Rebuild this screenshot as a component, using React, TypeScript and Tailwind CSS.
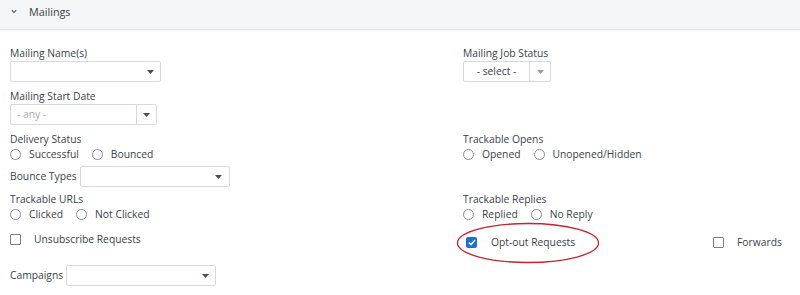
import type { ReactNode } from 'react';

const text = 'text-[10.3px] leading-[15px] font-medium text-[#3a3f49]';

function Caret({ light }: { light?: boolean }) {
  return (
    <svg width="7" height="4" viewBox="0 0 7 4">
      <path d="M0 0h7L3.5 4z" fill={light ? '#9a9ea4' : '#4a4f57'} />
    </svg>
  );
}

function Select({ w, value, placeholder, split, light }: { w: string; value?: string; placeholder?: string; split?: string; light?: boolean }) {
  return (
    <div className={`${w} h-[21px] flex items-stretch border border-[#d6dade] rounded-[2px] bg-white`}>
      <div className={`flex-1 flex items-center ${value ? 'justify-center' : 'pl-[6px]'} ${text}`}>
        {value && <span>{value}</span>}
        {placeholder && <span className="text-[#a9adb2] font-normal">{placeholder}</span>}
      </div>
      <div className={`${split ?? 'w-[20px]'} ${split ? 'border-l border-[#d6dade]' : ''} flex items-center justify-center`}>
        <Caret light={light} />
      </div>
    </div>
  );
}

function Radio({ label }: { label: string }) {
  return (
    <div className="flex items-center gap-[8px]">
      <span className="w-[11px] h-[11px] rounded-full border border-[#8a8e94] bg-white" />
      <span className={text}>{label}</span>
    </div>
  );
}

function Check({ label, checked, gap = 'gap-[13px]' }: { label: string; checked?: boolean; gap?: string }) {
  return (
    <div className={`flex items-center ${gap}`}>
      {checked ? (
        <span className="w-[11px] h-[11px] rounded-[2px] bg-[#1b6fd6] flex items-center justify-center">
          <svg width="8" height="7" viewBox="0 0 8 7">
            <path d="M1 3.6l2 2L7 1" fill="none" stroke="#fff" strokeWidth="1.5" />
          </svg>
        </span>
      ) : (
        <span className="w-[11px] h-[11px] rounded-[1px] border border-[#7c8087] bg-white" />
      )}
      <span className={text}>{label}</span>
    </div>
  );
}

function Label({ children }: { children: ReactNode }) {
  return <div className={text}>{children}</div>;
}

export default function App() {
  return (
    <div className="w-[800px] h-[295px] bg-white overflow-hidden font-['Open_Sans','Liberation_Sans',sans-serif]">
      {/* Section header */}
      <div className="h-[30px] bg-[#f3f5f6] border-b border-[#dee3e6] shadow-[0_1px_2px_rgba(0,0,0,0.05)] flex items-start pt-[4px] pl-[11px] gap-[12px]">
        <svg width="6" height="15" viewBox="0 0 6 15" className="shrink-0">
          <path d="M0.8 6.2L3 8.4l2.2-2.2" fill="none" stroke="#555b63" strokeWidth="1.1" />
        </svg>
        <span className="text-[10.8px] leading-[15px] font-medium text-[#3a3f49]">Mailings</span>
      </div>

      <div className="pl-[10px]">
        {/* row 1 */}
        <div className="flex mt-[16px]">
          <div className="w-[453px]">
            <Label>Mailing Name(s)</Label>
            <Select w="w-[151px]" />
          </div>
          <div>
            <Label>Mailing Job Status</Label>
            <Select w="w-[88px]" value="- select -" split="w-[21px]" light />
          </div>
        </div>

        {/* row 2 */}
        <div className="mt-[7px]">
          <Label>Mailing Start Date</Label>
          <Select w="w-[147px]" placeholder="- any -" split="w-[20px]" />
        </div>

        {/* row 3 */}
        <div className="flex mt-[7px]">
          <div className="w-[453px]">
            <Label>Delivery Status</Label>
            <div className="flex gap-[13px]">
              <Radio label="Successful" />
              <Radio label="Bounced" />
            </div>
          </div>
          <div>
            <Label>Trackable Opens</Label>
            <div className="flex gap-[13px]">
              <Radio label="Opened" />
              <Radio label="Unopened/Hidden" />
            </div>
          </div>
        </div>

        {/* row 4 */}
        <div className="flex items-center gap-[3px] mt-[4px]">
          <span className={text}>Bounce Types</span>
          <Select w="w-[150px]" />
        </div>

        {/* row 5 */}
        <div className="flex mt-[5px]">
          <div className="w-[453px]">
            <Label>Trackable URLs</Label>
            <div className="flex gap-[13px]">
              <Radio label="Clicked" />
              <Radio label="Not Clicked" />
            </div>
          </div>
          <div>
            <Label>Trackable Replies</Label>
            <div className="flex gap-[13px]">
              <Radio label="Replied" />
              <Radio label="No Reply" />
            </div>
          </div>
        </div>

        {/* row 6 */}
        <div className="flex items-start mt-[10px]">
          <div className="w-[453px]">
            <Check label="Unsubscribe Requests" />
          </div>
          <div className="w-[250px] mt-[3px] relative">
            <div className="pl-[3px]">
              <Check label="Opt-out Requests" checked gap="gap-[14px]" />
            </div>
            <svg width="146" height="44" viewBox="0 0 146 44" className="absolute left-[-8px] top-[-14px] pointer-events-none">
              <ellipse cx="73" cy="22" rx="70.5" ry="19.5" fill="none" stroke="#c4262e" strokeWidth="1.3" />
            </svg>
          </div>
          <div className="mt-[3px]">
            <Check label="Forwards" />
          </div>
        </div>

        {/* row 7 */}
        <div className="flex items-center gap-[3px] mt-[15px]">
          <span className={text}>Campaigns</span>
          <Select w="w-[150px]" />
        </div>
      </div>
    </div>
  );
}
